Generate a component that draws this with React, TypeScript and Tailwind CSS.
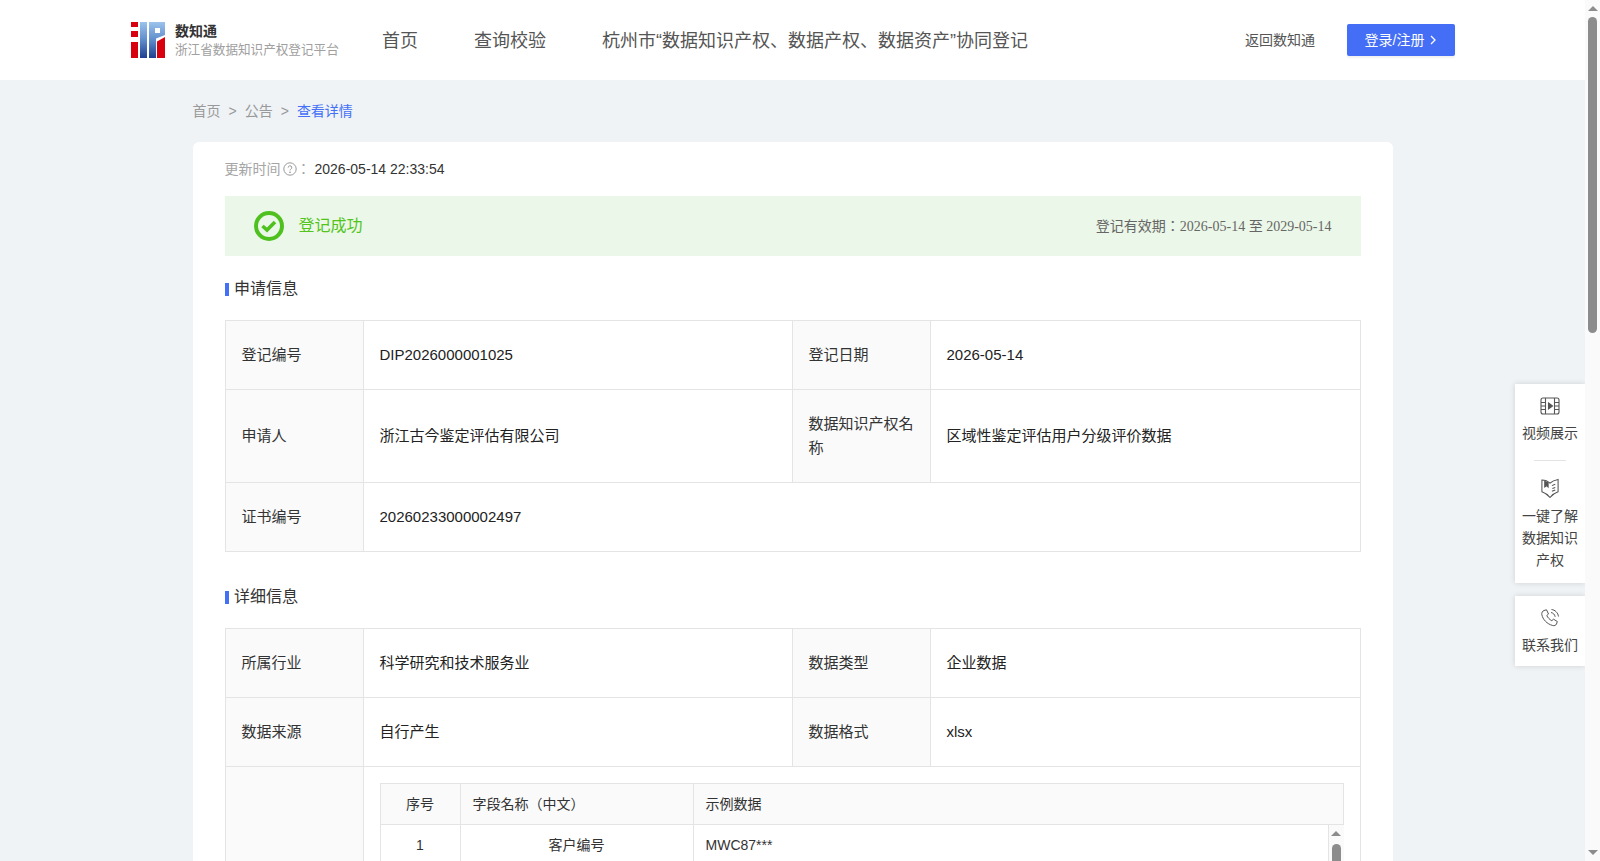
import type { ReactNode } from 'react'

const labelCell = 'border border-[#e4e4e4] bg-[#fafafa] px-4 text-left font-normal leading-[24px] text-[#333]'
const valueCell = 'border border-[#e4e4e4] px-4 text-[#222] leading-[24px]'

function Logo() {
	return (
		<svg width="34" height="36" viewBox="0 0 34 36" className="shrink-0">
			<defs>
				<linearGradient id="logoBlue" gradientUnits="userSpaceOnUse" x1="0" y1="0" x2="0" y2="36">
					<stop offset="0" stopColor="#9cc3ec" />
					<stop offset="0.5" stopColor="#5f8ccb" />
					<stop offset="1" stopColor="#1f3f8f" />
				</linearGradient>
			</defs>
			<rect x="0" y="0" width="7" height="36" fill="#d8000f" />
			<rect x="0" y="5" width="7" height="4" fill="#fff" />
			<rect x="0" y="15" width="7" height="5" fill="#fff" />
			<rect x="9" y="0" width="7" height="36" fill="url(#logoBlue)" />
			<path d="M18 0H34V13L25 16.500V36H18Z" fill="url(#logoBlue)" />
			<rect x="24" y="6" width="5" height="5" fill="#fff" />
			<path d="M26 19.500L34 15V36H26Z" fill="#d8000f" />
		</svg>
	)
}

function SectionTitle({ children }: { children: ReactNode }) {
	return (
		<div className="flex items-center text-[16px] leading-[24px] text-[#333]">
			<span className="mr-[5.500px] h-[13px] w-[4px] bg-[#4470f5]" />
			{children}
		</div>
	)
}

function Row({ height, children }: { height: number; children: ReactNode }) {
	return <tr style={{ height }}>{children}</tr>
}

function InfoTable({ children }: { children: ReactNode }) {
	return (
		<table className="w-[1136px] table-fixed border-collapse text-[15px]">
			<colgroup>
				<col className="w-[138px]" />
				<col className="w-[429px]" />
				<col className="w-[138px]" />
				<col />
			</colgroup>
			<tbody>{children}</tbody>
		</table>
	)
}

function SideItem({ icon, children }: { icon: ReactNode; children: ReactNode }) {
	return (
		<div className="flex flex-col items-center text-center text-[14px] leading-[22px] text-[#444]">
			{icon}
			<div className="mt-[7px] w-[56px]">{children}</div>
		</div>
	)
}

export default function App() {
	return (
		<div className="flex h-[861px] w-[1600px] overflow-hidden bg-white font-['Liberation_Sans','Noto_Sans_CJK_JP',sans-serif]">
			<div className="relative h-full w-[1585px] overflow-hidden bg-[#eff3f6]">
				{/* Header */}
				<header className="flex h-[80px] items-center bg-white pl-[131px] pr-[130px]">
					<Logo />
					<div className="ml-[10px] w-[207px]">
						<div className="text-[14px] font-bold leading-[20px] text-[#333]">数知通</div>
						<div className="text-[12.600px] leading-[19px] text-[#a0a0a0]">浙江省数据知识产权登记平台</div>
					</div>
					<nav className="flex gap-[56px] pt-[2px] text-[18px] text-[#555]">
						<a>首页</a>
						<a>查询校验</a>
						<a>杭州市“数据知识产权、数据产权、数据资产”协同登记</a>
					</nav>
					<a className="ml-auto text-[14px] text-[#555]">返回数知通</a>
					<button className="ml-[32px] flex h-[32px] w-[108px] items-center justify-center rounded-[2px] bg-[#446ef5] text-[14px] text-white shadow-[0_2px_2px_rgba(0,0,0,0.06)]">
						登录/注册
						<svg width="8" height="10" viewBox="0 0 8 10" className="ml-[5px]" fill="none" stroke="#fff" strokeWidth="1.300">
							<path d="M2 1l4 4-4 4" />
						</svg>
					</button>
				</header>

				<main className="mx-auto w-[1200px]">
					{/* Breadcrumb */}
					<div className="flex h-[62px] items-center text-[14px] text-[#999]">
						<span>首页</span>
						<span className="mx-[8px]">&gt;</span>
						<span>公告</span>
						<span className="mx-[8px]">&gt;</span>
						<span className="text-[#4470f5]">查看详情</span>
					</div>

					{/* Card */}
					<div className="rounded-[6px] bg-white px-[32px] pb-[40px]">
						<div className="flex h-[54px] items-center text-[14px] text-[#333]">
							<span className="text-[#a5a5a5]">更新时间</span>
							<svg width="14" height="14" viewBox="0 0 14 14" fill="none" stroke="#999" strokeWidth="1" className="ml-[2px]">
								<circle cx="7" cy="7" r="6.200" />
								<path d="M5.200 5.600a1.800 1.800 0 1 1 2.600 1.600c-.5.3-.8.6-.8 1.200" />
								<circle cx="7" cy="10.200" r="0.400" fill="#999" />
							</svg>
							<span className="mr-[4px] text-[#a5a5a5]">：</span>
							<span>2026-05-14 22:33:54</span>
						</div>

						<div className="flex h-[60px] items-center justify-between bg-[#ebf7e8] pl-[29px] pr-[29px]">
							<div className="flex items-center">
								<svg width="30" height="30" viewBox="0 0 30 30" fill="none" stroke="#4fc11f">
									<circle cx="15" cy="15" r="13" strokeWidth="4" />
									<path d="M8.500 15l4.500 4 8-8" strokeWidth="3.600" />
								</svg>
								<span className="ml-[15px] text-[16px] text-[#52c41a]">登记成功</span>
							</div>
							<div className="font-['Liberation_Serif','Noto_Sans_CJK_JP',serif] text-[14px] text-[#666]">
								登记有效期：2026-05-14 至 2029-05-14
							</div>
						</div>

						<div className="mt-[21px] mb-[19px]">
							<SectionTitle>申请信息</SectionTitle>
						</div>
						<InfoTable>
							<Row height={69}>
								<th className={labelCell}>登记编号</th>
								<td className={valueCell}>DIP2026000001025</td>
								<th className={labelCell}>登记日期</th>
								<td className={valueCell}>2026-05-14</td>
							</Row>
							<Row height={93}>
								<th className={labelCell}>申请人</th>
								<td className={valueCell}>浙江古今鉴定评估有限公司</td>
								<th className={labelCell}>数据知识产权名称</th>
								<td className={valueCell}>区域性鉴定评估用户分级评价数据</td>
							</Row>
							<Row height={69}>
								<th className={labelCell}>证书编号</th>
								<td className={valueCell} colSpan={3}>20260233000002497</td>
							</Row>
						</InfoTable>

						<div className="mt-[33px] mb-[19px]">
							<SectionTitle>详细信息</SectionTitle>
						</div>
						<InfoTable>
							<Row height={69}>
								<th className={labelCell}>所属行业</th>
								<td className={valueCell}>科学研究和技术服务业</td>
								<th className={labelCell}>数据类型</th>
								<td className={valueCell}>企业数据</td>
							</Row>
							<Row height={69}>
								<th className={labelCell}>数据来源</th>
								<td className={valueCell}>自行产生</td>
								<th className={labelCell}>数据格式</th>
								<td className={valueCell}>xlsx</td>
							</Row>
							<tr>
								<th className={labelCell} />
								<td className="border border-[#e4e4e4] p-[16px]" colSpan={3}>
									<div className="w-[964px]">
										<table className="w-full table-fixed border-collapse text-[14px] text-[#333]">
											<colgroup>
												<col className="w-[80px]" />
												<col className="w-[233px]" />
												<col />
											</colgroup>
											<thead>
												<tr className="h-[41px] bg-[#fafafa]">
													<th className="border border-[#e4e4e4] font-normal">序号</th>
													<th className="border border-[#e4e4e4] px-[12px] text-left font-normal">字段名称（中文）</th>
													<th className="border border-[#e4e4e4] px-[12px] text-left font-normal">示例数据</th>
												</tr>
											</thead>
										</table>
										<div className="flex items-stretch">
											<table className="w-[949px] self-start table-fixed border-collapse text-[14px] text-[#333]">
												<colgroup>
													<col className="w-[80px]" />
													<col className="w-[233px]" />
													<col />
												</colgroup>
												<tbody>
													<tr className="h-[41px]">
														<td className="border border-t-0 border-[#e4e4e4] text-center">1</td>
														<td className="border border-t-0 border-[#e4e4e4] text-center">客户编号</td>
														<td className="border border-t-0 border-[#e4e4e4] px-[12px]">MWC87***</td>
													</tr>
												</tbody>
											</table>
											<div className="flex h-[120px] w-[15px] flex-col items-center bg-[#fafafa] pt-[6px]">
												<span className="h-0 w-0 border-x-[5px] border-b-[5px] border-x-transparent border-b-[#8c8c8c]" />
												<span className="mt-[8px] h-[100px] w-[9px] rounded-t-[5px] bg-[#8c8c8c]" />
											</div>
										</div>
									</div>
								</td>
							</tr>
						</InfoTable>
					</div>
				</main>

				{/* Floating side panels */}
				<div className="absolute left-[1515px] top-[384px] w-[70px] bg-white pb-[12px] pt-[13px] shadow-[0_0_6px_rgba(0,0,0,0.14)]">
					<SideItem
						icon={
							<svg width="20" height="18" viewBox="0 0 20 18" fill="none" stroke="#555" strokeWidth="1.100">
								<rect x="1" y="1" width="18" height="16" rx="2" />
								<path d="M5.500 1v16M14.500 1v16M1 5.500h4.500M1 9h4.500M1 12.500h4.500M14.500 5.500H19M14.500 9H19M14.500 12.500H19" />
								<path d="M8.500 6l4 3-4 3z" fill="#555" />
							</svg>
						}
					>
						视频展示
					</SideItem>
					<div className="mx-auto mb-[17px] mt-[16px] h-px w-[32px] bg-[#e4e4e4]" />
					<SideItem
						icon={
							<svg width="20" height="20" viewBox="0 0 20 21" fill="none" stroke="#555" strokeWidth="1.100">
								<path d="M1.500 2C4.500 2 7.500 3 10 5.500 12.500 3 15.500 2 18.500 1.500V14.500C15.500 15.500 12.500 17.500 10 20.500 7.500 17.500 4.500 15.500 1.500 14.500Z" />
								<path d="M4.500 3v6.500l2-1.500 1.500 1.500V4.500" fill="#555" />
								<path d="M12 8l3.500-1.500M12.500 11l3-1M12 14l3.500-1.500" />
							</svg>
						}
					>
						一键了解数据知识产权
					</SideItem>
				</div>
				<div className="absolute left-[1515px] top-[596px] h-[70px] w-[70px] bg-white pt-[11px] shadow-[0_0_6px_rgba(0,0,0,0.14)]">
					<SideItem
						icon={
							<svg width="20" height="20" viewBox="0 0 20 20" fill="none" stroke="#555" strokeWidth="1" className="mb-[-1px] mt-[1px]">
								<path d="M4 2.500 6.500 1.800 8.500 6 6.800 7.500c.8 2 2.700 4 5 5.200l1.700-1.500 3.800 2.300-.8 2.500c-.6 1.400-2.300 2-3.800 1.500C7 16 2.800 11.500 1.800 6.500 1.500 4.800 2.500 3 4 2.500Z" />
								<path d="M11 4.500c2 .3 3.800 2 4.200 4.300M11.500 1.500c3.500.3 6.500 3.300 7 7" />
							</svg>
						}
					>
						联系我们
					</SideItem>
				</div>
			</div>

			{/* Page scrollbar */}
			<div className="flex h-full w-[15px] flex-col items-center bg-[#fafafa] pt-[6px]">
				<span className="h-0 w-0 border-x-[5px] border-b-[5px] border-x-transparent border-b-[#8c8c8c]" />
				<span className="mt-[6px] h-[316px] w-[9px] rounded-[5px] bg-[#8c8c8c]" />
				<span className="mt-auto mb-[6px] h-0 w-0 border-x-[5px] border-t-[5px] border-x-transparent border-t-[#8c8c8c]" />
			</div>
		</div>
	)
}
